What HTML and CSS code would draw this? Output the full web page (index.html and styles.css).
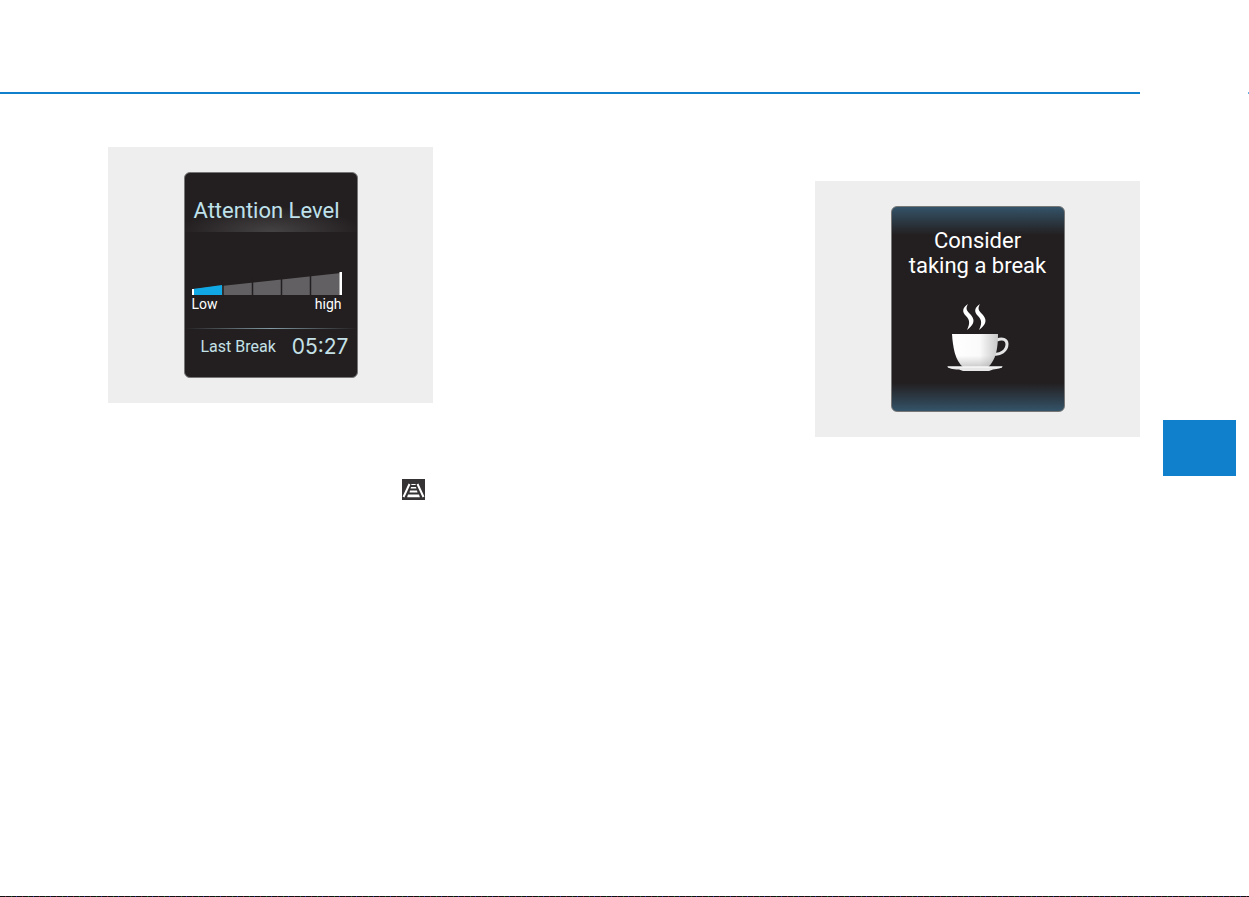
FILE: index.html
```html
<!DOCTYPE html>
<html lang="en">
<head>
<meta charset="utf-8">
<title>Driver attention display</title>
<link rel="stylesheet" href="styles.css">
</head>
<body>
<header class="page-head"><span class="head-rule"></span><span class="head-tick"></span></header>
<main class="columns">
  <section class="column column-left">
    <figure class="figure">
      <div class="screen screen-level">
        <h2 class="level-title">Attention Level</h2>
        <div class="level">
          <svg class="level-chart" viewBox="0 0 150 24" role="img" aria-label="Attention level low">
            <path fill="#626062" d="M1 17 149 1V23H1z"/>
            <path fill="#10a9e6" d="M1 17 30 13V23H1z"/>
            <path stroke="#231f20" stroke-width="1.5" d="M31 8V24M60.500 5V24M89.500 3V24M118.500 1V24"/>
            <path fill="#fff" d="M0 17h2v6H0zM147.500 0h2.500v23h-2.500z"/>
          </svg>
          <div class="level-labels"><span>Low</span><span>high</span></div>
        </div>
        <div class="last-break"><span>Last Break</span><time class="break-time">05:27</time></div>
      </div>
    </figure>
    <svg class="lane-icon" viewBox="0 0 23 21" role="img" aria-label="Lane indicator">
      <path fill="#353334" d="M0 0h23v21H0z"/>
      <path fill="none" stroke="#fff" stroke-width="2" d="M7.500 5 1.500 18M15.500 5l6 13"/>
      <path fill="#fff" d="M9.500 5h4l.3 1h-4.600zM9 8h5l.4 1.500H8.600zM8 11.500h7l.5 2h-8zM6 15.500h11l.9 2.700H5.100z"/>
    </svg>
  </section>
  <section class="column column-right">
    <figure class="figure">
      <div class="screen screen-break">
        <p class="break-text">Consider<br>taking a break</p>
        <svg class="cup" viewBox="0 0 62 68" role="img" aria-label="Cup of coffee">
          <defs>
            <linearGradient id="cup-side"><stop offset="0" stop-color="#fff"/><stop offset=".6" stop-color="#fafafa"/><stop offset="1" stop-color="#c8c8c9"/></linearGradient>
            <linearGradient id="cup-foot" x2="0" y2="1"><stop offset=".65" stop-color="#aaa" stop-opacity="0"/><stop offset="1" stop-color="#999" stop-opacity=".5"/></linearGradient>
          </defs>
          <path fill="#fff" d="M21 0C15 4 15 8 19 12c4 4 4 8 1 14 6-5 9-9 4-15-4-4-6-6-3-11zM33 0c-6 4-6 8-2 12 4 4 4 8 1 14 6-5 9-9 4-15-4-4-6-6-3-11z"/>
          <path fill="none" stroke="#e4e4e4" stroke-width="3" d="M50 36c5-2 10-1 10 4 0 7-7 11-13 10"/>
          <path fill="url(#cup-side)" d="M5 30h46c0 14-2 26-10 33H16C8 56 6 44 5 30z"/>
          <path fill="url(#cup-foot)" d="M5 30h46c0 14-2 26-10 33H16C8 56 6 44 5 30z"/>
          <path fill="#e7e7e7" d="M0 62.500h56c-2 2-5 2.500-10 3l-4 1.500H16L12 65.500C5 65.500 2 64.500 0 62.500z"/>
          <path stroke="#fff" d="M1 63h54"/>
        </svg>
      </div>
    </figure>
  </section>
  <div class="chapter-tab"></div>
</main>
<footer class="page-foot"></footer>
</body>
</html>
```
FILE: styles.css
```css
* { box-sizing: border-box; }
body {
  margin: 0;
  min-height: 100vh;
  display: flex;
  flex-direction: column;
  background: #fff;
  color: #fff;
  font-family: Roboto, "Liberation Sans", sans-serif;
}
.page-head {
  display: flex;
  align-items: flex-end;
  height: 94px;
}
.head-rule { flex: 1; height: 2px; margin-right: 108px; background: #1080cc; }
.head-tick { width: 1px; height: 2px; background: #65b1e0; }
.columns {
  flex: 1;
  display: grid;
  grid-template-columns: 325px 1fr 325px 96px;
  align-items: start;
  padding: 0 13px 0 108px;
}
.column { display: flex; flex-direction: column; }
.column-left { grid-column: 1; margin-top: 53px; }
.column-right { grid-column: 3; margin-top: 87px; }
.chapter-tab { grid-column: 4; height: 56px; margin: 326px 0 0 23px; background: #1080cc; }
.figure { margin: 0; padding: 25px 0; display: flex; justify-content: center; background: #eee; }
.screen {
  width: 174px;
  height: 206px;
  border: 1px solid #777;
  border-radius: 6px;
  background: #231f20;
  overflow: hidden;
}
.level-title {
  margin: 0;
  height: 59px;
  padding: 24px 0 0 9px;
  font-size: 22px;
  line-height: 28px;
  font-weight: 400;
  color: #bfe1ec;
  background: radial-gradient(ellipse at bottom, #464344, transparent 75%) bottom / 100% 24px no-repeat;
}
.level { padding: 40px 15px 0 7px; }
.level-chart { display: block; width: 100%; }
.level-labels { display: flex; justify-content: space-between; font-size: 14px; line-height: 16px; }
.last-break {
  display: flex;
  align-items: center;
  justify-content: space-between;
  height: 36px;
  margin-top: 16px;
  padding: 0 8px 0 16px;
  font-size: 16px;
  color: #c5e1e8;
  background: linear-gradient(90deg, transparent, #829ba5, transparent) top / 100% 1px no-repeat;
}
.break-time { font-family: Inter, Roboto, sans-serif; font-size: 21px; }
.lane-icon { align-self: flex-end; width: 23px; height: 21px; margin: 76px 8px 0 0; }
.screen-break {
  display: flex;
  flex-direction: column;
  align-items: center;
  background: linear-gradient(#345368, #231f20 28px, #231f20 176px, #345368);
}
.break-text { margin: 21px 0 0; font-size: 22px; line-height: 25px; text-align: center; }
.cup { width: 62px; height: 68px; margin-top: 26px; }
.page-foot {
  height: 1px;
  background: repeating-linear-gradient(90deg, #111 0 5px, #7a1a3a 5px 6px, #111 6px 11px, #1d6a2c 11px 12px, #111 12px 16px, #2c2c9a 16px 17px);
}
```
